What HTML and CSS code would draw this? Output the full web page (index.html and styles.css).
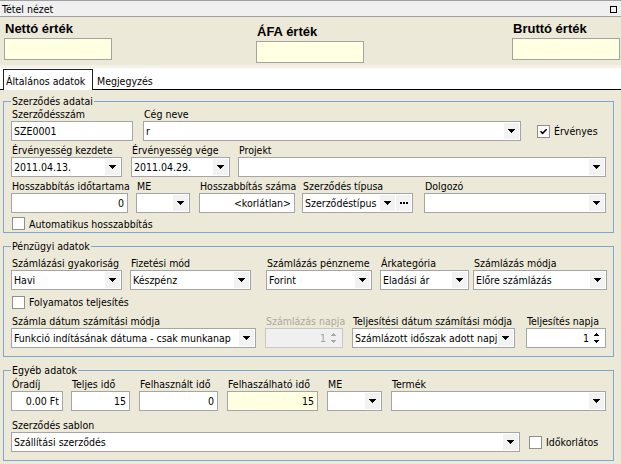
FILE: index.html
```html
<!DOCTYPE html>
<html lang="hu">
<head>
<meta charset="utf-8">
<title>Tétel nézet</title>
<link rel="stylesheet" href="styles.css">
</head>
<body>
<div class="titlebar"><span>Tétel nézet</span><span class="sq"></span></div>

<div class="header">
  <div class="hfield"><div class="hlabel">Nettó érték</div><div class="hinput"></div></div>
  <div class="hfield afa"><div class="hlabel">ÁFA érték</div><div class="hinput"></div></div>
  <div class="hfield brutto"><div class="hlabel">Bruttó érték</div><div class="hinput"></div></div>
</div>

<div class="tabs">
  <div class="tab active">Általános adatok</div>
  <div class="tab">Megjegyzés</div>
</div>

<div class="content">
  <fieldset class="grp g1">
    <legend>Szerződés adatai</legend>
    <div class="row">
      <div class="fld w122"><div class="lbl">Szerződésszám</div><div class="inp">SZE0001</div></div>
      <div class="fld w378 ml10"><div class="lbl">Cég neve</div><div class="inp combo"><span class="val">r</span><span class="dd"><svg width="7" height="4" viewBox="0 0 7 4" shape-rendering="crispEdges"><path d="M0 0h7v1H0zM1 1h5v1H1zM2 2h3v1H2zM3 3h1v1H3z"/></svg></span></div></div>
      <div class="fld ml16"><div class="lbl"></div><div class="chk cb-in"><span class="box"><svg width="11" height="11" viewBox="0 0 11 11"><path d="M2.5 5.2 4.6 7.4 8.6 3.2" fill="none" stroke="#000" stroke-width="1.6"/></svg></span>Érvényes</div></div>
    </div>
    <div class="row mt2">
      <div class="fld w111"><div class="lbl">Érvényesség kezdete</div><div class="inp combo"><span class="val">2011.04.13.</span><span class="dd"><svg width="7" height="4" viewBox="0 0 7 4" shape-rendering="crispEdges"><path d="M0 0h7v1H0zM1 1h5v1H1zM2 2h3v1H2zM3 3h1v1H3z"/></svg></span></div></div>
      <div class="fld w99 ml9"><div class="lbl">Érvényesség vége</div><div class="inp combo"><span class="val">2011.04.29.</span><span class="dd"><svg width="7" height="4" viewBox="0 0 7 4" shape-rendering="crispEdges"><path d="M0 0h7v1H0zM1 1h5v1H1zM2 2h3v1H2zM3 3h1v1H3z"/></svg></span></div></div>
      <div class="fld w368 ml8"><div class="lbl">Projekt</div><div class="inp combo"><span class="val"></span><span class="dd"><svg width="7" height="4" viewBox="0 0 7 4" shape-rendering="crispEdges"><path d="M0 0h7v1H0zM1 1h5v1H1zM2 2h3v1H2zM3 3h1v1H3z"/></svg></span></div></div>
    </div>
    <div class="row mt2">
      <div class="fld w117"><div class="lbl">Hosszabbítás időtartama</div><div class="inp num">0</div></div>
      <div class="fld w54 ml8"><div class="lbl">ME</div><div class="inp combo"><span class="val"></span><span class="dd"><svg width="7" height="4" viewBox="0 0 7 4" shape-rendering="crispEdges"><path d="M0 0h7v1H0zM1 1h5v1H1zM2 2h3v1H2zM3 3h1v1H3z"/></svg></span></div></div>
      <div class="fld w96 ml9"><div class="lbl">Hosszabbítás száma</div><div class="inp num">&lt;korlátlan&gt;</div></div>
      <div class="fld w111 ml7"><div class="lbl">Szerződés típusa</div><div class="inp combo"><span class="val">Szerződéstípus</span><span class="dd"><svg width="7" height="4" viewBox="0 0 7 4" shape-rendering="crispEdges"><path d="M0 0h7v1H0zM1 1h5v1H1zM2 2h3v1H2zM3 3h1v1H3z"/></svg></span><span class="dd dots"><svg width="8" height="2" viewBox="0 0 8 2" shape-rendering="crispEdges"><path d="M0 0h2v2H0zM3 0h2v2H3zM6 0h2v2H6z"/></svg></span></div></div>
      <div class="fld w182 ml11"><div class="lbl">Dolgozó</div><div class="inp combo"><span class="val"></span><span class="dd"><svg width="7" height="4" viewBox="0 0 7 4" shape-rendering="crispEdges"><path d="M0 0h7v1H0zM1 1h5v1H1zM2 2h3v1H2zM3 3h1v1H3z"/></svg></span></div></div>
    </div>
    <div class="row mt2">
      <div class="chk cbrow"><span class="box"></span>Automatikus hosszabbítás</div>
    </div>
  </fieldset>

  <fieldset class="grp g2">
    <legend>Pénzügyi adatok</legend>
    <div class="row">
      <div class="fld w111"><div class="lbl">Számlázási gyakoriság</div><div class="inp combo"><span class="val">Havi</span><span class="dd"><svg width="7" height="4" viewBox="0 0 7 4" shape-rendering="crispEdges"><path d="M0 0h7v1H0zM1 1h5v1H1zM2 2h3v1H2zM3 3h1v1H3z"/></svg></span></div></div>
      <div class="fld w121 ml8"><div class="lbl">Fizetési mód</div><div class="inp combo"><span class="val">Készpénz</span><span class="dd"><svg width="7" height="4" viewBox="0 0 7 4" shape-rendering="crispEdges"><path d="M0 0h7v1H0zM1 1h5v1H1zM2 2h3v1H2zM3 3h1v1H3z"/></svg></span></div></div>
      <div class="fld w106 ml15"><div class="lbl">Számlázás pénzneme</div><div class="inp combo"><span class="val">Forint</span><span class="dd"><svg width="7" height="4" viewBox="0 0 7 4" shape-rendering="crispEdges"><path d="M0 0h7v1H0zM1 1h5v1H1zM2 2h3v1H2zM3 3h1v1H3z"/></svg></span></div></div>
      <div class="fld w89 ml8"><div class="lbl">Árkategória</div><div class="inp combo"><span class="val">Eladási ár</span><span class="dd"><svg width="7" height="4" viewBox="0 0 7 4" shape-rendering="crispEdges"><path d="M0 0h7v1H0zM1 1h5v1H1zM2 2h3v1H2zM3 3h1v1H3z"/></svg></span></div></div>
      <div class="fld w134 ml4"><div class="lbl">Számlázás módja</div><div class="inp combo"><span class="val">Előre számlázás</span><span class="dd"><svg width="7" height="4" viewBox="0 0 7 4" shape-rendering="crispEdges"><path d="M0 0h7v1H0zM1 1h5v1H1zM2 2h3v1H2zM3 3h1v1H3z"/></svg></span></div></div>
    </div>
    <div class="row mt2">
      <div class="chk cbrow tall"><span class="box"></span>Folyamatos teljesítés</div>
    </div>
    <div class="row mt2">
      <div class="fld w245"><div class="lbl">Számla dátum számítási módja</div><div class="inp combo"><span class="val">Funkció indításának dátuma - csak munkanap</span><span class="dd"><svg width="7" height="4" viewBox="0 0 7 4" shape-rendering="crispEdges"><path d="M0 0h7v1H0zM1 1h5v1H1zM2 2h3v1H2zM3 3h1v1H3z"/></svg></span></div></div>
      <div class="fld w78 ml9"><div class="lbl dis">Számlázás napja</div><div class="inp combo spin disabled"><span class="val num">1</span><span class="sp"><svg width="5" height="3" viewBox="0 0 5 3" shape-rendering="crispEdges"><path d="M2 0h1v1H2zM1 1h3v1H1zM0 2h5v1H0z"/></svg><svg width="5" height="3" viewBox="0 0 5 3" shape-rendering="crispEdges"><path d="M0 0h5v1H0zM1 1h3v1H1zM2 2h1v1H2z"/></svg></span></div></div>
      <div class="fld w163 ml9"><div class="lbl">Teljesítési dátum számítási módja</div><div class="inp combo"><span class="val">Számlázott időszak adott napj</span><span class="dd"><svg width="7" height="4" viewBox="0 0 7 4" shape-rendering="crispEdges"><path d="M0 0h7v1H0zM1 1h5v1H1zM2 2h3v1H2zM3 3h1v1H3z"/></svg></span></div></div>
      <div class="fld w80 ml11"><div class="lbl">Teljesítés napja</div><div class="inp combo spin"><span class="val num">1</span><span class="sp"><svg width="5" height="3" viewBox="0 0 5 3" shape-rendering="crispEdges"><path d="M2 0h1v1H2zM1 1h3v1H1zM0 2h5v1H0z"/></svg><svg width="5" height="3" viewBox="0 0 5 3" shape-rendering="crispEdges"><path d="M0 0h5v1H0zM1 1h3v1H1zM2 2h1v1H2z"/></svg></span></div></div>
    </div>
  </fieldset>

  <fieldset class="grp g3">
    <legend>Egyéb adatok</legend>
    <div class="row">
      <div class="fld w52"><div class="lbl">Óradíj</div><div class="inp num">0.00 Ft</div></div>
      <div class="fld w59 ml8"><div class="lbl">Teljes idő</div><div class="inp num">15</div></div>
      <div class="fld w79 ml9"><div class="lbl">Felhasznált idő</div><div class="inp num">0</div></div>
      <div class="fld w91 ml9"><div class="lbl">Felhaszálható idő</div><div class="inp num yellow">15</div></div>
      <div class="fld w55 ml9"><div class="lbl">ME</div><div class="inp combo"><span class="val"></span><span class="dd"><svg width="7" height="4" viewBox="0 0 7 4" shape-rendering="crispEdges"><path d="M0 0h7v1H0zM1 1h5v1H1zM2 2h3v1H2zM3 3h1v1H3z"/></svg></span></div></div>
      <div class="fld w215 ml9"><div class="lbl">Termék</div><div class="inp combo"><span class="val"></span><span class="dd"><svg width="7" height="4" viewBox="0 0 7 4" shape-rendering="crispEdges"><path d="M0 0h7v1H0zM1 1h5v1H1zM2 2h3v1H2zM3 3h1v1H3z"/></svg></span></div></div>
    </div>
    <div class="row mt7">
      <div class="fld w509"><div class="lbl">Szerződés sablon</div><div class="inp combo"><span class="val">Szállítási szerződés</span><span class="dd"><svg width="7" height="4" viewBox="0 0 7 4" shape-rendering="crispEdges"><path d="M0 0h7v1H0zM1 1h5v1H1zM2 2h3v1H2zM3 3h1v1H3z"/></svg></span></div></div>
      <div class="fld ml9"><div class="lbl"></div><div class="chk cb-in"><span class="box"></span>Időkorlátos</div></div>
    </div>
  </fieldset>
</div>
</body>
</html>
```

FILE: styles.css
```css
* { box-sizing: border-box; }
html, body { margin: 0; padding: 0; }
body {
  width: 621px;
  height: 464px;
  overflow: hidden;
  background: #ece9d8;
  font-family: "DejaVu Sans Condensed", "DejaVu Sans", sans-serif;
  font-size: 10.5px;
  color: #000;
}

/* title bar */
.titlebar {
  height: 17px;
  background: #f0f0f0;
  border-top: 1px solid #a0a0a0;
  border-bottom: 1px solid #a0a0a0;
  display: flex;
  justify-content: space-between;
  align-items: flex-start;
  padding: 1px 4px 0 2px;
  line-height: 14px;
}
.sq {
  width: 7px;
  height: 7px;
  border: 1px solid #000;
  margin-top: 4px;
}

/* header with totals */
.header {
  height: 51px;
  display: flex;
  align-items: flex-start;
  padding: 4px 0 0 4px;
  border-bottom: 3px solid #f3f1e8;
}
.hfield { width: 108px; }
.hfield.afa { margin-left: 144px; margin-top: 3px; }
.hfield.brutto { margin-left: 148px; }
.hlabel {
  font-family: "Liberation Sans", Arial, sans-serif;
  font-weight: bold;
  font-size: 13px;
  line-height: 16px;
  height: 17px;
  padding-left: 1px;
}
.hinput {
  height: 22px;
  background: #ffffe1;
  border: 1px solid #a3a3a3;
}

/* tabs */
.tabs {
  height: 22px;
  background: #fff;
  border-bottom: 1px solid #000;
  display: flex;
  align-items: flex-end;
  padding-left: 3px;
}
.tab {
  height: 21px;
  padding: 3px 3px 0 3px;
  line-height: 16px;
  margin-bottom: -1px;
  border: 1px solid transparent;
  border-bottom: 0;
}
.tab.active {
  width: 90px;
  padding-left: 2px;
  border-color: #222;
  background: #fff;
}

/* groups */
.content { padding: 0; }
.grp {
  margin: 5px 7px 0 3px;
  border: 1px solid #7aa7d4;
  padding: 0 6px 0 7px;
  min-width: 0;
}
.g2 { margin-top: 7px; padding-top: 4px; padding-bottom: 8px; }
.g3 { margin-top: 7px; padding-top: 1px; padding-bottom: 8px; }
legend {
  padding: 0 1px;
  line-height: 12px;
  font-size: 10.5px;
}

.row { display: flex; align-items: flex-start; }
.mt2 { margin-top: 2px; }
.mt7 { margin-top: 7px; }

.fld { display: flex; flex-direction: column; flex: none; }
.lbl {
  height: 14px;
  line-height: 14px;
  padding-left: 1px;
  white-space: nowrap;
}
.lbl.dis { color: #aca899; }

.inp {
  height: 20px;
  border: 1px solid #a5a5a5;
  background: #fff;
  line-height: 17px;
  padding: 1px 3px 0 2px;
  white-space: nowrap;
  overflow: hidden;
}
.inp.num { text-align: right; }
.inp.yellow { background: #ffffe1; }

.combo {
  display: flex;
  align-items: stretch;
  padding: 0 0 0 2px;
}
.combo .val {
  flex: 1;
  min-width: 0;
  overflow: hidden;
  padding-top: 1px;
}
.combo .val.num { text-align: right; padding-right: 2px; }
.dd {
  width: 15px;
  flex: none;
  margin: 1px;
  background: #f2f2f2;
  display: flex;
  align-items: center;
  justify-content: center;
}
.dd svg { fill: #000; display: block; }
.dd.dots { margin-left: 0; }

.sp {
  width: 11px;
  flex: none;
  display: flex;
  flex-direction: column;
  align-items: center;
  justify-content: center;
  gap: 4px;
  margin-right: 3px;
}
.sp svg { fill: #000; display: block; }

.disabled { background: #f0f0f0; border-color: #c7c7c7; color: #a0a0a0; }
.disabled .sp svg { fill: #a8a8a8; }

/* checkboxes */
.chk {
  display: flex;
  align-items: center;
  white-space: nowrap;
}
.cb-in { height: 20px; }
.cbrow { height: 17px; padding-left: 1px; }
.cbrow.tall { height: 20px; }
.box {
  width: 13px;
  height: 13px;
  border: 1px solid #8e8f8f;
  background: #fff;
  margin-right: 4px;
  display: flex;
  align-items: center;
  justify-content: center;
}
.box svg { display: block; }

/* widths and spacings */
.w52 { width: 52px; }
.w54 { width: 54px; }
.w55 { width: 55px; }
.w59 { width: 59px; }
.w78 { width: 78px; }
.w79 { width: 79px; }
.w80 { width: 80px; }
.w89 { width: 89px; }
.w91 { width: 91px; }
.w96 { width: 96px; }
.w99 { width: 99px; }
.w106 { width: 106px; }
.w111 { width: 111px; }
.w117 { width: 117px; }
.w121 { width: 121px; }
.w122 { width: 122px; }
.w134 { width: 134px; }
.w163 { width: 163px; }
.w182 { width: 182px; }
.w215 { width: 215px; }
.w245 { width: 245px; }
.w368 { width: 368px; }
.w378 { width: 378px; }
.w509 { width: 509px; }
.ml4 { margin-left: 4px; }
.ml7 { margin-left: 7px; }
.ml8 { margin-left: 8px; }
.ml9 { margin-left: 9px; }
.ml10 { margin-left: 10px; }
.ml11 { margin-left: 11px; }
.ml15 { margin-left: 15px; }
.ml16 { margin-left: 16px; }
```
